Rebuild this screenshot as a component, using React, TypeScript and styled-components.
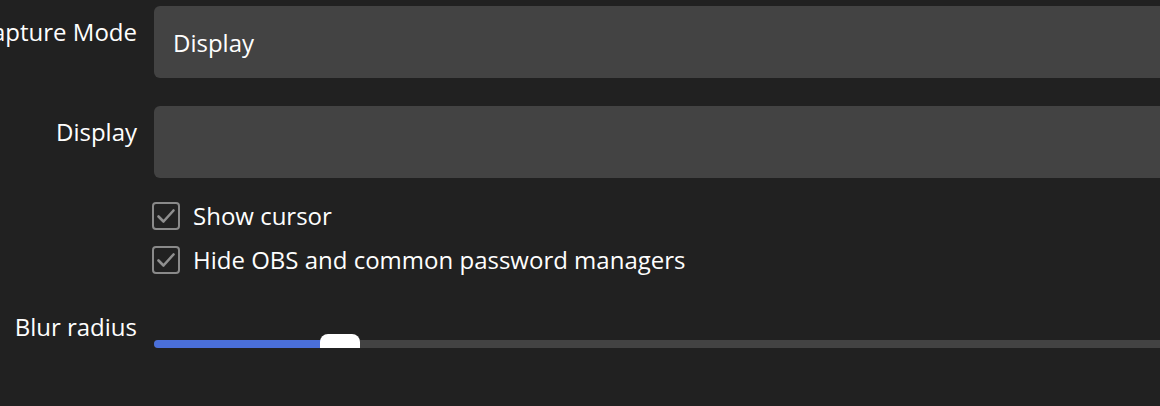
import styled, { createGlobalStyle } from "styled-components";

const GlobalStyle = createGlobalStyle`
  html, body {
    margin: 0;
    padding: 0;
    background: #212121;
    overflow: hidden;
  }
  body {
    font-family: "Open Sans", "Noto Sans", sans-serif;
    color: #fefefe;
  }
`;

const Form = styled.div`
  display: grid;
  grid-template-columns: 137px 1040px;
  column-gap: 17px;
  padding-top: 6px;
  width: 1194px;
`;

const Label = styled.div<{ $top: number }>`
  display: flex;
  justify-content: flex-end;
  white-space: nowrap;
  font-size: 24px;
  line-height: 32px;
  padding-top: ${(p) => p.$top}px;
`;

const Field = styled.div<{ $gap?: number }>`
  height: 72px;
  border-radius: 6px;
  background: #434343;
  display: flex;
  align-items: center;
  padding-left: 19px;
  font-size: 24px;
  margin-bottom: ${(p) => p.$gap ?? 0}px;
`;

const Checks = styled.div`
  grid-column: 2;
  display: flex;
  flex-direction: column;
  gap: 12px;
  margin: 22px 0 0 -2px;
`;

const CheckRow = styled.label`
  display: flex;
  align-items: center;
  gap: 13px;
  font-size: 24px;
  line-height: 32px;
`;

const Box = styled.span`
  width: 28px;
  height: 28px;
  box-sizing: border-box;
  border: 2px solid #8a8a8a;
  border-radius: 4px;
  display: flex;
  align-items: center;
  justify-content: center;
`;

const Slider = styled.div`
  position: relative;
  height: 8px;
  margin-top: 64px;
  border-radius: 4px;
  background: #434343;
`;

const Fill = styled.div`
  height: 100%;
  border-radius: 4px;
  background: #4a6fd9;
`;

const Thumb = styled.div`
  position: absolute;
  top: -6px;
  width: 40px;
  height: 21px;
  border-radius: 8px;
  background: #ffffff;
`;

function Check({ label }: { label: string }) {
  return (
    <CheckRow>
      <Box>
        <svg width="24" height="24" viewBox="0 0 24 24">
          <path d="M4.5 12.5 L9.5 17.5 L19.5 6.5" fill="none" stroke="#8f8f8f" strokeWidth="2.6" strokeLinecap="round" strokeLinejoin="round" />
        </svg>
      </Box>
      {label}
    </CheckRow>
  );
}

export default function App() {
  const value = 166;
  return (
    <>
      <GlobalStyle />
      <Form>
        <Label $top={10}>Capture Mode</Label>
        <Field $gap={28}>Display</Field>
        <Label $top={10}>Display</Label>
        <Field />
        <Checks>
          <Check label="Show cursor" />
          <Check label="Hide OBS and common password managers" />
        </Checks>
        <Label $top={35}>Blur radius</Label>
        <Slider>
          <Fill style={{ width: value + 10 }} />
          <Thumb style={{ left: value }} />
        </Slider>
      </Form>
    </>
  );
}
